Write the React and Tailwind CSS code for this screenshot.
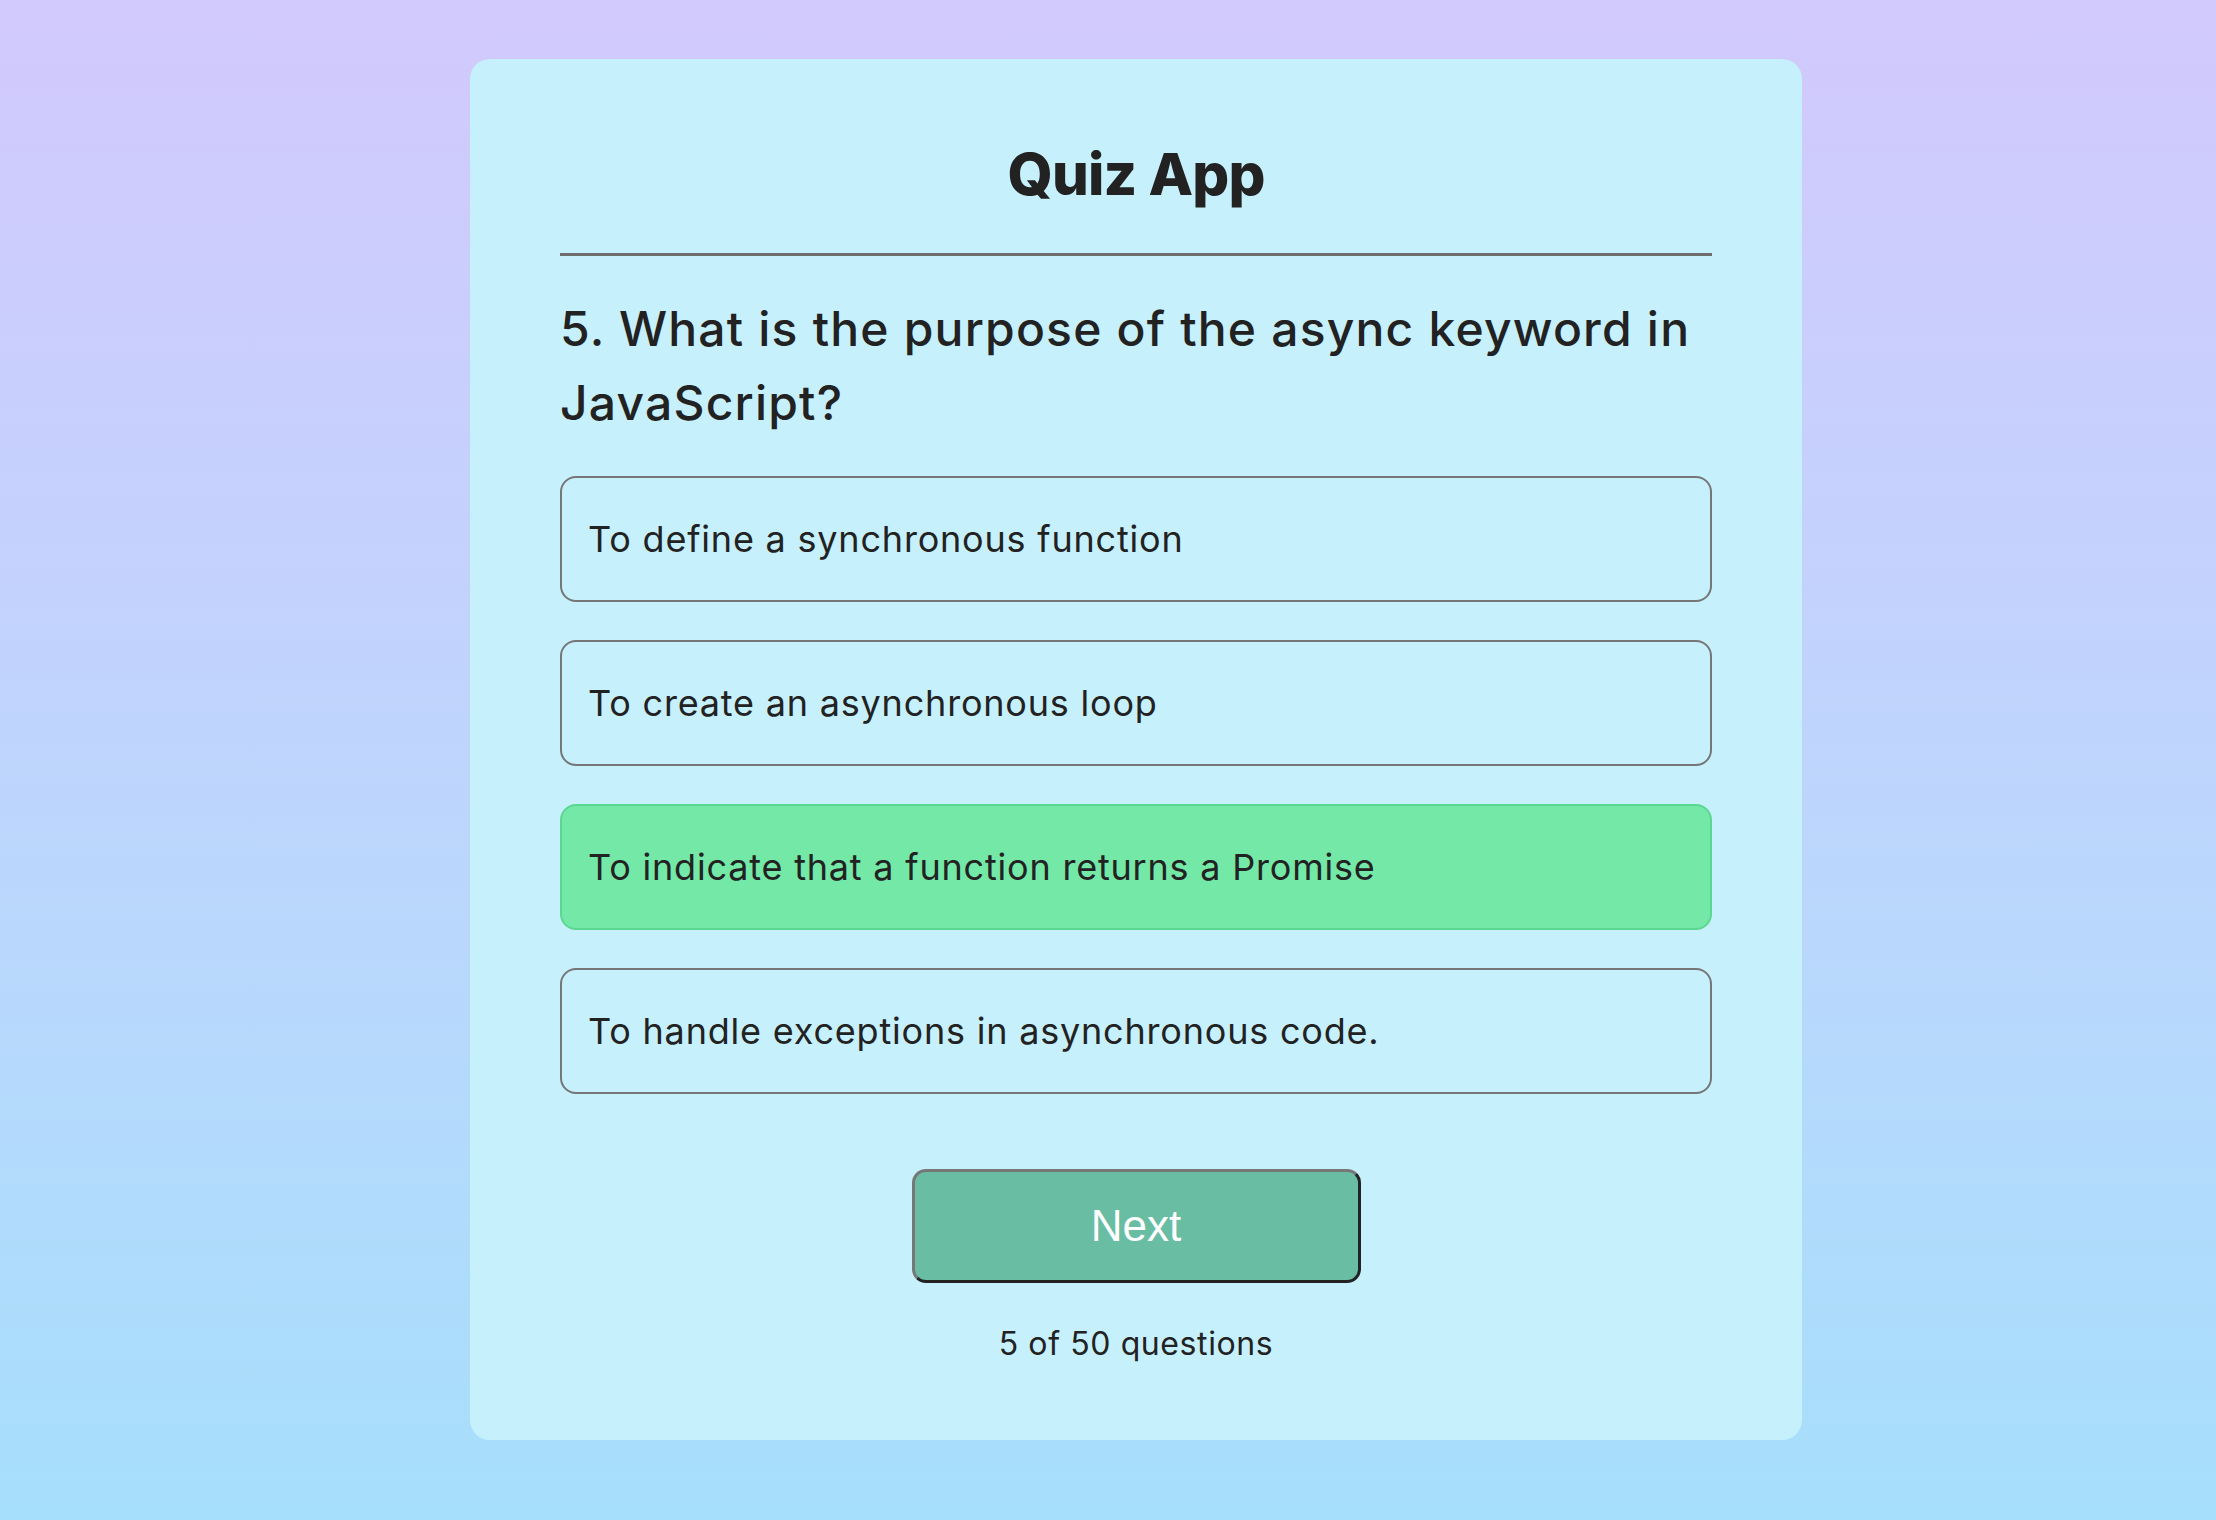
import React, { useState } from 'react';

const options = [
  'To define a synchronous function',
  'To create an asynchronous loop',
  'To indicate that a function returns a Promise',
  'To handle exceptions in asynchronous code.',
];

export default function App() {
  const [selected, setSelected] = useState(2);

  return (
    <div className="min-h-screen w-full bg-gradient-to-b from-[#d2c9fc] to-[#a6dffb] pt-[59px] pb-[80px] pl-[56px] font-['Inter',sans-serif] text-[#222]">
      <div className="mx-auto w-[1332px] rounded-[20px] bg-[#c6f0fc] px-[90px] pt-[73px] pb-[72px]">
        <h1 className="text-center text-[58px] font-extrabold leading-[84px] tracking-[-0.8px]">Quiz App</h1>
        <hr className="mt-[37px] border-0 h-[3px] bg-[#6d6d6d]" />

        <h2 className="mt-[36px] text-[48px] font-medium leading-[74px] tracking-[1.2px]">
          5. What is the purpose of the async keyword in JavaScript?
        </h2>

        <ul className="mt-[36px] flex flex-col gap-[38px]">
          {options.map((opt, i) => (
            <li
              key={i}
              onClick={() => setSelected(i)}
              className={`flex h-[126px] cursor-pointer items-center rounded-[16px] border-2 px-[26px] text-[36px] tracking-[0.8px] ${
                selected === i
                  ? 'border-[#5cd791] bg-[#73e8a7]'
                  : 'border-[#767676] bg-transparent'
              }`}
            >
              {opt}
            </li>
          ))}
        </ul>

        <div className="mt-[75px] flex justify-center">
          <button className="h-[114px] w-[449px] rounded-[14px] border-[3px] border-t-[#777] border-l-[#777] border-r-[#222] border-b-[#222] bg-[#68bda3] font-['Liberation_Sans',Arial,sans-serif] text-[44px] font-medium text-white">
            Next
          </button>
        </div>

        <p className="mt-[37px] text-center text-[32px] leading-[48px] tracking-[0.6px]">5 of 50 questions</p>
      </div>
    </div>
  );
}
